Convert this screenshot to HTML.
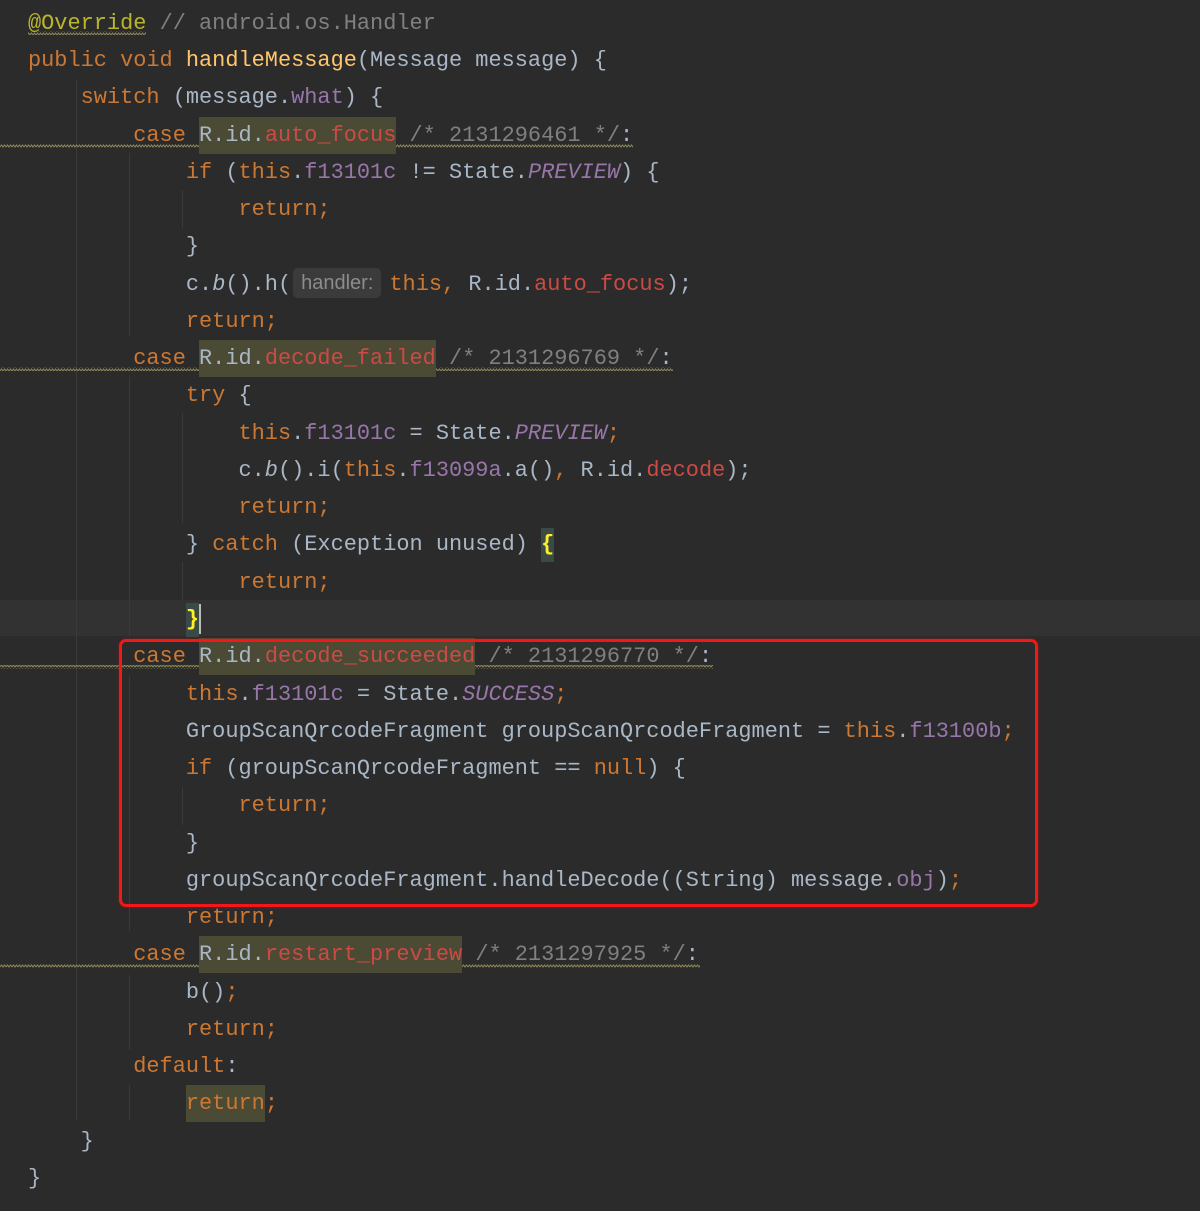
<!DOCTYPE html>
<html><head><meta charset="utf-8">
<style>
html,body{margin:0;padding:0;background:#2b2b2b;width:1200px;height:1211px;overflow:hidden}
.l{position:absolute;left:28px;height:37px;line-height:37px;white-space:pre;font-family:"Liberation Mono","DejaVu Sans Mono",monospace;font-size:21.93px;color:#a9b7c6}
.k{color:#cc7832}.f{color:#9876aa}.r{color:#cc4a45}.c{color:#808080}.m{color:#ffc66d}.a{color:#bbb529}
.i{font-style:italic}
.h{background:#4b4a35;display:inline-block;height:37px}
.hint{display:inline-block;background:#3b3b3b;color:#8c8c8c;font-family:"Liberation Sans",sans-serif;font-size:20px;line-height:30px;height:30px;padding:0 8px;border-radius:5px;margin:0 8px 0 2px;vertical-align:1px}
.g{position:absolute;width:1px;background:#3a3a3a}
.br{background:#3a4a45;color:#ffef28;font-weight:bold;display:inline-block;height:34px;line-height:34px}
</style></head><body>
<div style="position:absolute;left:0;top:600px;width:1200px;height:36px;background:#323232"></div>
<div class="g" style="left:76px;top:80px;height:1040px"></div>
<div class="g" style="left:129px;top:153px;height:183px"></div>
<div class="g" style="left:129px;top:377px;height:260px"></div>
<div class="g" style="left:129px;top:676px;height:255px"></div>
<div class="g" style="left:129px;top:975px;height:75px"></div>
<div class="g" style="left:129px;top:1085px;height:35px"></div>
<div class="g" style="left:182px;top:190px;height:38px"></div>
<div class="g" style="left:182px;top:413px;height:110px"></div>
<div class="g" style="left:182px;top:562px;height:38px"></div>
<div class="g" style="left:182px;top:787px;height:38px"></div>
<svg width="1200" height="1211" style="position:absolute;left:0;top:0">
<defs><pattern id="w" width="6" height="4" patternUnits="userSpaceOnUse"><path d="M0 3 L1.5 1 L3 3 L4.5 1 L6 3" stroke="#8d8a55" stroke-width="1" fill="none"/></pattern></defs>
<rect x="28" y="31" width="118" height="4" fill="url(#w)"/>
<rect x="0" y="144" width="633" height="4" fill="url(#w)"/>
<rect x="0" y="367" width="673" height="4" fill="url(#w)"/>
<rect x="0" y="665" width="713" height="4" fill="url(#w)"/>
<rect x="0" y="964" width="700" height="4" fill="url(#w)"/>
</svg>
<div style="position:absolute;left:0;top:1px">
<div class="l" style="top:4px"><span class="a">@Override</span> <span class="c">// android.os.Handler</span></div>
<div class="l" style="top:41px"><span class="k">public void </span><span class="m">handleMessage</span>(Message message) {</div>
<div class="l" style="top:78px">    <span class="k">switch</span> (message.<span class="f">what</span>) {</div>
<div class="l" style="top:116px">        <span class="k">case </span><span class="h">R.id.<span class="r">auto_focus</span></span> <span class="c">/* 2131296461 */</span>:</div>
<div class="l" style="top:153px">            <span class="k">if</span> (<span class="k">this</span>.<span class="f">f13101c</span> != State.<span class="f i">PREVIEW</span>) {</div>
<div class="l" style="top:190px">                <span class="k">return;</span></div>
<div class="l" style="top:227px">            }</div>
<div class="l" style="top:265px">            c.<span class="i">b</span>().h(<span class="hint">handler:</span><span class="k">this,</span> R.id.<span class="r">auto_focus</span>);</div>
<div class="l" style="top:302px">            <span class="k">return;</span></div>
<div class="l" style="top:339px">        <span class="k">case </span><span class="h">R.id.<span class="r">decode_failed</span></span> <span class="c">/* 2131296769 */</span>:</div>
<div class="l" style="top:376px">            <span class="k">try</span> {</div>
<div class="l" style="top:414px">                <span class="k">this</span>.<span class="f">f13101c</span> = State.<span class="f i">PREVIEW</span><span class="k">;</span></div>
<div class="l" style="top:451px">                c.<span class="i">b</span>().i(<span class="k">this</span>.<span class="f">f13099a</span>.a()<span class="k">,</span> R.id.<span class="r">decode</span>);</div>
<div class="l" style="top:488px">                <span class="k">return;</span></div>
<div class="l" style="top:525px">            } <span class="k">catch</span> (Exception unused) <span class="br">{</span></div>
<div class="l" style="top:563px">                <span class="k">return;</span></div>
<div class="l" style="top:600px">            <span class="br">}</span><span style="display:inline-block;width:2px;height:30px;background:#bbb;vertical-align:middle"></span></div>
<div class="l" style="top:637px">        <span class="k">case </span><span class="h">R.id.<span class="r">decode_succeeded</span></span> <span class="c">/* 2131296770 */</span>:</div>
<div class="l" style="top:675px">            <span class="k">this</span>.<span class="f">f13101c</span> = State.<span class="f i">SUCCESS</span><span class="k">;</span></div>
<div class="l" style="top:712px">            GroupScanQrcodeFragment groupScanQrcodeFragment = <span class="k">this</span>.<span class="f">f13100b</span><span class="k">;</span></div>
<div class="l" style="top:749px">            <span class="k">if</span> (groupScanQrcodeFragment == <span class="k">null</span>) {</div>
<div class="l" style="top:786px">                <span class="k">return;</span></div>
<div class="l" style="top:824px">            }</div>
<div class="l" style="top:861px">            groupScanQrcodeFragment.handleDecode((String) message.<span class="f">obj</span>)<span class="k">;</span></div>
<div class="l" style="top:898px">            <span class="k">return;</span></div>
<div class="l" style="top:935px">        <span class="k">case </span><span class="h">R.id.<span class="r">restart_preview</span></span> <span class="c">/* 2131297925 */</span>:</div>
<div class="l" style="top:973px">            b()<span class="k">;</span></div>
<div class="l" style="top:1010px">            <span class="k">return;</span></div>
<div class="l" style="top:1047px">        <span class="k">default</span>:</div>
<div class="l" style="top:1084px">            <span class="k"><span class="h">return</span>;</span></div>
<div class="l" style="top:1122px">    }</div>
<div class="l" style="top:1159px">}</div>
</div>
<div style="position:absolute;left:119px;top:639px;width:913px;height:262px;border:3px solid #f01818;border-radius:7px;box-shadow:0 0 3px rgba(255,0,0,0.4)"></div>
</body></html>
